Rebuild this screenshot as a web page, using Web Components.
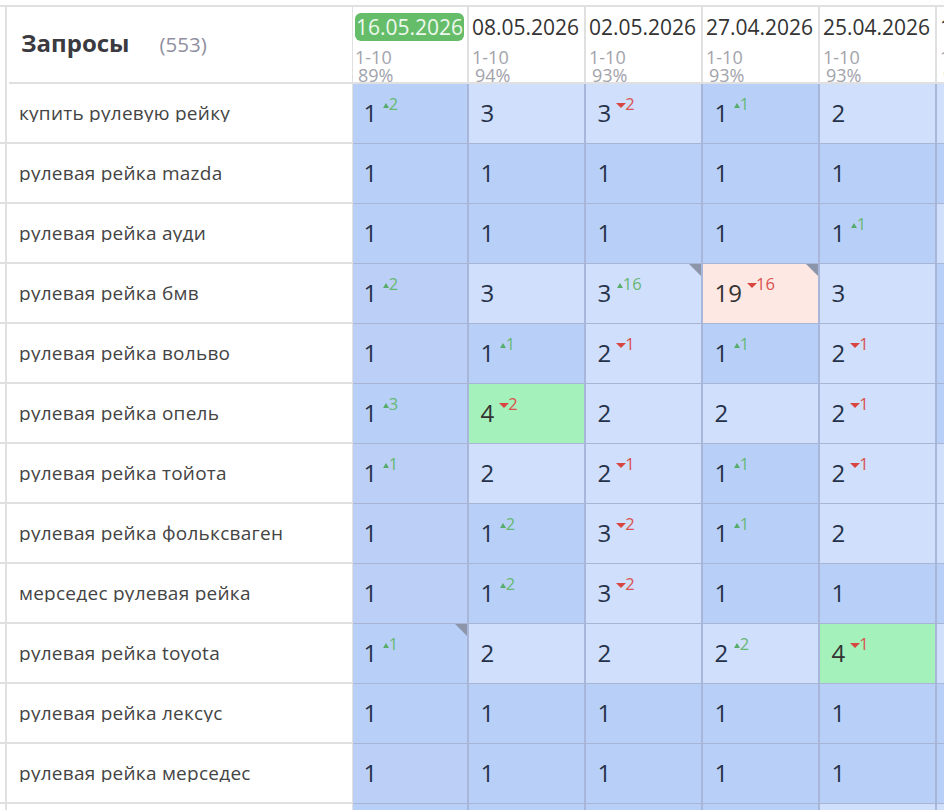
<!DOCTYPE html>
<html lang="ru"><head><meta charset="utf-8"><title>Запросы</title>
<style>
html,body{margin:0;padding:0;background:#fff;width:944px;height:810px;overflow:hidden;font-family:"Open Sans","Noto Sans",sans-serif}
</style></head><body>
<rank-table></rank-table>
<script>
class RankCell extends HTMLElement{
  constructor(){super();const s=this.attachShadow({mode:'open'});
  s.innerHTML=`<style>
  :host{display:flex;box-sizing:border-box;width:117px;height:60px;padding:11px 0 0 11.5px;border-right:2px solid #a7b6d9;border-bottom:1px solid #a9b5d2;background:#b8d0f8;color:#25324a;position:relative;align-items:flex-start}
  :host([tone=m]){background:#bccff7}
  :host([tone=l]){background:#d0dffc}
  :host([tone=g]){background:#a5f1bb;color:#333}
  :host([tone=p]){background:#fde8e4;color:#333}
  :host([first]){width:116px;padding-left:10.5px}
  .v{font-size:24px;line-height:30px;margin-top:3px}
  .a{width:0;height:0;margin-top:8px}
  :host([dir=up]) .a{margin-left:5.5px;border:solid transparent;border-width:0 3px 5px;border-bottom-color:#57ad69}
  :host([dir=down]) .a{margin-left:5px;margin-right:-1px;border:solid transparent;border-width:5px 5px 0;border-top-color:#d9453f}
  .d{font-size:16.5px;line-height:18px}
  :host([dir=up]) .d{color:#66b874}
  :host([dir=down]) .d{color:#d9534f}
  .f{display:none;position:absolute;top:0;right:0;width:0;height:0;border-style:solid;border-width:0 12px 12px 0;border-color:transparent #8d95ab transparent transparent}
  :host([flag]) .f{display:block}
  </style><span class="v"><slot></slot></span><span class="a"></span><span class="d"><slot name="delta"></slot></span><span class="f"></span>`}
}
customElements.define('rank-cell',RankCell);

class RankName extends HTMLElement{
  constructor(){super();const s=this.attachShadow({mode:'open'});
  s.innerHTML=`<style>
  :host{display:block;box-sizing:border-box;width:353px;height:60px;padding:18px 0 0 19px;border-right:1px solid #e0e0e0;color:#444;font-size:19px;letter-spacing:.26px;
    background:linear-gradient(#e0e0e0,#e0e0e0) 5px 0/2px 100% no-repeat,linear-gradient(#e0e0e0,#e0e0e0) 0 100%/100% 2px no-repeat,#fff}
  span{display:block;height:20px;line-height:22px;overflow:hidden;white-space:nowrap}
  </style><span><slot></slot></span>`}
}
customElements.define('rank-name',RankName);

class DateHead extends HTMLElement{
  constructor(){super();const s=this.attachShadow({mode:'open'});
  s.innerHTML=`<style>
  :host{display:block;box-sizing:border-box;width:117px;height:77px;padding:6px 0 0 3px;border-right:2px solid #e0e0e0;border-bottom:2px solid #e0e0e0;white-space:nowrap;color:#333}
  :host([first]){width:116px;padding-left:2px}
  .t{display:block;height:28px;line-height:28px;font-size:21px;padding:0 1px;margin-left:-1px;border-radius:6px;width:max-content}
  :host([first]) .t{margin-left:0}
  :host([active]) .t{background:#66bd69;color:#eef8ee}
  .r,.p{display:block;font-size:18px;line-height:18px;color:#a2a3ab}
  .r{margin-top:7px}
  .p{padding-left:3px}
  </style><span class="t"><slot></slot></span><span class="r"><slot name="range"></slot></span><span class="p"><slot name="pct"></slot></span>`}
}
customElements.define('date-head',DateHead);

class RankRow extends HTMLElement{
  constructor(){super();const s=this.attachShadow({mode:'open'});
  s.innerHTML=`<style>:host{display:flex;width:max-content}</style><slot></slot>`}
}
customElements.define('rank-row',RankRow);

class RankTitle extends HTMLElement{
  constructor(){super();const s=this.attachShadow({mode:'open'});
  s.innerHTML=`<style>
  :host{display:flex;box-sizing:border-box;width:353px;height:77px;align-items:baseline;padding:21px 0 0 21px;border-right:1px solid #e0e0e0;
    background:linear-gradient(#e0e0e0,#e0e0e0) 5px 0/2px 100% no-repeat,linear-gradient(#e0e0e0,#e0e0e0) 9px 100%/100% 2px no-repeat,#fff}
  b{font-size:24px;line-height:30px;color:#3a3a40;font-weight:700}
  i{font-style:normal;font-size:20.5px;color:#8f8f9f;margin-left:30px}
  </style><b><slot></slot></b><i><slot name="count"></slot></i>`}
}
customElements.define('rank-title',RankTitle);

const heads=[['16.05.2026','89%'],['08.05.2026','94%'],['02.05.2026','93%'],['27.04.2026','93%'],['25.04.2026','93%'],['18.04.2026','93%']];
/* value, tone, direction, delta, flag */
const rows=[
['купить рулевую рейку',['1','d','up','2'],['3','l'],['3','l','down','2'],['1','d','up','1'],['2','l'],['','l']],
['рулевая рейка mazda',['1','d'],['1','d'],['1','d'],['1','d'],['1','d'],['','d']],
['рулевая рейка ауди',['1','d'],['1','d'],['1','d'],['1','d'],['1','d','up','1'],['','l']],
['рулевая рейка бмв',['1','m','up','2'],['3','l'],['3','l','up','16',1],['19','p','down','16',1],['3','l'],['','d']],
['рулевая рейка вольво',['1','m'],['1','d','up','1'],['2','l','down','1'],['1','d','up','1'],['2','l','down','1'],['','d']],
['рулевая рейка опель',['1','d','up','3'],['4','g','down','2'],['2','l'],['2','l'],['2','l','down','1'],['','d']],
['рулевая рейка тойота',['1','m','up','1'],['2','l'],['2','l','down','1'],['1','d','up','1'],['2','l','down','1'],['','l']],
['рулевая рейка фольксваген',['1','m'],['1','d','up','2'],['3','l','down','2'],['1','d','up','1'],['2','l'],['','l']],
['мерседес рулевая рейка',['1','m'],['1','d','up','2'],['3','l','down','2'],['1','d'],['1','d'],['','d']],
['рулевая рейка toyota',['1','d','up','1',1],['2','l'],['2','l'],['2','l','up','2'],['4','g','down','1'],['','l']],
['рулевая рейка лексус',['1','d'],['1','d'],['1','d'],['1','d'],['1','d'],['','d']],
['рулевая рейка мерседес',['1','m'],['1','d'],['1','d'],['1','d'],['1','d'],['','d']],
['',['','d'],['','d'],['','d'],['','d'],['','l'],['','l']]
];
class RankTable extends HTMLElement{
  constructor(){super();const s=this.attachShadow({mode:'open'});
  const cell=(c,i)=>`<rank-cell tone="${c[1]}"${i==0?' first':''}${c[2]?` dir="${c[2]}"`:''}${c[4]?' flag':''}>${c[0]}${c[3]?`<span slot="delta">${c[3]}</span>`:''}</rank-cell>`;
  s.innerHTML=`<style>
  :host{display:block;box-sizing:border-box;width:944px;height:810px;overflow:hidden;padding:5px 0 0 0;background:#fff}
  .top{border-top:2px solid #e0e0e0;width:max-content}
  </style><div class="top"><rank-row><rank-title>Запросы<span slot="count">(553)</span></rank-title>${heads.map((h,i)=>`<date-head${i==0?' first active':''}>${h[0]}<span slot="range">1-10</span><span slot="pct">${h[1]}</span></date-head>`).join('')}</rank-row>
  ${rows.map(r=>`<rank-row><rank-name>${r[0]}</rank-name>${r.slice(1).map(cell).join('')}</rank-row>`).join('')}</div>`;
  }
}
customElements.define('rank-table',RankTable);
</script>
</body></html>
